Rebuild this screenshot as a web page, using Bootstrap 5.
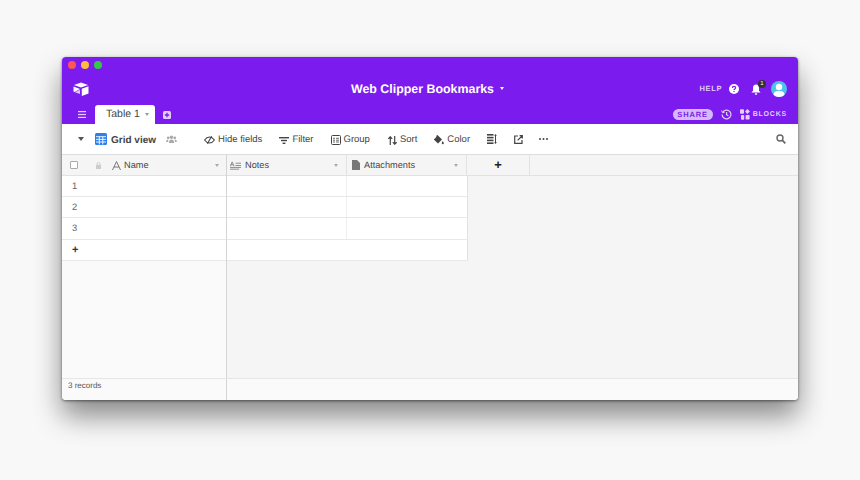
<!DOCTYPE html>
<html lang="en">
<head>
    <meta charset="UTF-8">
    <title>Web Clipper Bookmarks</title>
    <link href="https://cdn.jsdelivr.net/npm/bootstrap@5.3.3/dist/css/bootstrap.min.css" rel="stylesheet">
    <style>
        body { background: #f8f8f8; font-family: "Liberation Sans", Arial, sans-serif; color: #444; min-height: 100vh; padding: 57px 0 0 62px; text-rendering: geometricPrecision; }
        svg { display: block; flex: none; }
        .app-window { width: 736px; height: 343px; background: #fff; border-radius: 4px; overflow: hidden; box-shadow: 0 16px 28px rgba(0,0,0,.45), 0 1px 3px rgba(0,0,0,.5); }
        .app-purple { background: #7c1bee; height: 67px; color: #fff; }
        .traffic { height: 16px; padding: 4px 0 0 6px; gap: 5px; }
        .traffic span { width: 8px; height: 8px; border-radius: 50%; }
        .title-row { display: grid; grid-template-columns: 1fr auto 1fr; align-items: center; height: 32px; padding: 0 11px; }
        .app-title { font-size: 12.4px; font-weight: 700; gap: 6px; padding-right: 5px; }
        .caret-d { width: 0; height: 0; border-left: 2.5px solid transparent; border-right: 2.5px solid transparent; border-top: 3px solid currentColor; }
        .help-txt { font-size: 7.5px; letter-spacing: .6px; font-weight: 700; color: #e2cdfb; margin-right: 7px; }
        .bell-wrap { position: relative; margin: 0 10px 0 12px; }
        .bell-count { position: absolute; top: -4px; right: -5px; width: 8px; height: 8px; border-radius: 50%; background: #333; color: #fff; font-size: 6px; line-height: 8px; text-align: center; }
        .avatar { width: 16px; height: 16px; border-radius: 50%; background: #4fc3e8; overflow: hidden; }
        .tab-row { height: 19px; padding: 0 11px 0 16px; }
        .tab-active { width: 60px; height: 19px; margin-left: 9px; background: #fff; color: #444; border-radius: 3px 3px 0 0; font-size: 10.5px; padding: 0 6px 0 11px; }
        .tab-active .caret-d { color: #999; }
        .share-pill { width: 40px; height: 11px; margin-right: 8px; border-radius: 6px; background: #d5baf9; color: #7c1bee; font-size: 7.5px; line-height: 11px; font-weight: 700; letter-spacing: .9px; text-align: center; }
        .blocks-txt { font-size: 7px; font-weight: 700; letter-spacing: .8px; color: #e2cdfb; margin-left: 3px; padding-top: 2px; }
        .tool-row { height: 31px; padding: 0 12px 0 16px; border-bottom: 1px solid #ddd; font-size: 9.5px; }
        .tool-item { gap: 3px; margin-right: 17px; white-space: nowrap; padding-top: 2px; }
        .view-name { font-size: 10px; font-weight: 700; color: #444; padding-top: 2px; }
        .grid-area { height: 223px; }
        .left-pane { width: 165px; background: #fafafa; border-right: 1px solid #d4d4d4; }
        .right-pane { flex: 1; background: #f5f5f5; }
        .head-row { height: 21px; background: #f5f5f5; border-bottom: 1px solid #e2e2e2; font-size: 9.2px; }
        .head-label { padding-top: 2px; }
        .col-head { width: 120px; height: 100%; padding: 0 8px 0 3px; gap: 4px; border-right: 1px solid #e2e2e2; }
        .col-add { width: 63px; height: 100%; border-right: 1px solid #e2e2e2; color: #222; font-size: 13px; font-weight: 700; }
        .row-left { height: 21px; background: #fff; border-bottom: 1px solid #e8e8e8; padding-left: 10px; font-size: 9.4px; color: #666; }
        .row-right { width: 241px; height: 21px; background: #fff; border-bottom: 1px solid #e8e8e8; border-right: 1px solid #e2e2e2; }
        .row-cell { width: 120px; height: 100%; border-right: 1px solid #efefef; }
        .row-add { font-size: 11px; font-weight: 700; color: #333; }
        .foot-row { height: 22px; background: #fafafa; border-top: 1px solid #e6e6e6; }
        .foot-left { width: 165px; height: 100%; padding: 1px 0 0 6px; border-right: 1px solid #d4d4d4; font-size: 8px; color: #555; }
        .check-box { width: 8px; height: 8px; border: 1px solid #aaa; border-radius: 1px; background: #fff; margin-right: 17px; }
    </style>
</head>
<body>
<div class="app-window d-flex flex-column">
    <div class="app-purple">
        <div class="traffic d-flex">
            <span style="background:#fc5753"></span>
            <span style="background:#fdbc40"></span>
            <span style="background:#34c84a"></span>
        </div>
        <div class="title-row">
            <svg width="16" height="14" viewBox="0 0 16 14" fill="#fff"><path d="M8 0.5 1 3 8 5.6 15 3z"/><path d="M8.8 6.7 15.5 4.2V11.4L8.8 14z"/><path d="M0.5 4.4 7 7 1.5 10 0.5 9.6z"/><path d="M7 7.8V12L1.8 10.3z" opacity=".75"/></svg>
            <div class="app-title d-flex align-items-center">Web Clipper Bookmarks <span class="caret-d"></span></div>
            <div class="d-flex align-items-center justify-content-end">
                <span class="help-txt">HELP</span>
                <svg width="10" height="10" viewBox="0 0 10 10"><circle cx="5" cy="5" r="5" fill="#fff"/><path d="M3.4 3.9C3.4 3 4.1 2.4 5 2.4S6.6 3 6.6 3.8C6.6 4.9 5 5 5 6.1" fill="none" stroke="#7c1bee" stroke-width="1.2"/><rect x="4.4" y="6.9" width="1.2" height="1.2" fill="#7c1bee"/></svg>
                <div class="bell-wrap">
                    <svg width="10" height="11" viewBox="0 0 10 11" fill="#fff"><path d="M5 .5C7 .5 8 2 8 4V6.8L9.6 8.6H.4L2 6.8V4C2 2 3 .5 5 .5z"/><rect x="3.8" y="9.2" width="2.4" height="1.5" rx=".7"/></svg>
                    <span class="bell-count">1</span>
                </div>
                <div class="avatar"><svg width="16" height="16" viewBox="0 0 16 16" fill="#fff"><circle cx="8" cy="6" r="3.2"/><path d="M2.5 13.5C3 10.5 5 10 8 10S13 10.5 13.5 13.5V16H2.5z"/></svg></div>
            </div>
        </div>
        <div class="tab-row d-flex align-items-end">
            <svg class="align-self-center" width="8" height="7" viewBox="0 0 8 7" fill="#e2cdfb"><rect width="8" height="1.2"/><rect y="2.9" width="8" height="1.2"/><rect y="5.8" width="8" height="1.2"/></svg>
            <div class="tab-active d-flex align-items-center justify-content-between">Table 1 <span class="caret-d"></span></div>
            <svg class="align-self-center ms-2" width="8" height="8" viewBox="0 0 8 8"><rect width="8" height="8" rx="1.5" fill="#e2cdfb"/><path d="M4 1.8V6.2M1.8 4H6.2" stroke="#7c1bee" stroke-width="1.3"/></svg>
            <div class="ms-auto d-flex align-items-center align-self-center">
                <span class="share-pill">SHARE</span>
                <svg class="me-2" width="11" height="11" viewBox="0 0 11 11" fill="none" stroke="#e2cdfb" stroke-width="1.2"><path d="M1.7 3.3A4.4 4.4 0 1 1 1.1 5.5"/><path d="M.6 1.5 1.5 3.7 3.7 3.2" stroke-width="1"/><path d="M5.6 3V5.7L7.4 6.8"/></svg>
                <svg width="10" height="11" viewBox="0 0 10 11" fill="#e2cdfb"><rect width="4" height="4.6" y=".2" rx=".8"/><rect x="1" y="6" width="3.2" height="4.8" rx=".8"/><path d="M7.3 0 10 2.5 7.3 5 5 2.5z"/><rect x="5.6" y="6" width="4" height="4.6" rx=".8"/></svg>
                <span class="blocks-txt">BLOCKS</span>
            </div>
        </div>
    </div>

    <div class="tool-row d-flex align-items-center">
        <span class="caret-d me-2" style="border-left-width:3.5px;border-right-width:3.5px;border-top-width:4.5px;color:#555"></span>
        <svg class="me-1" style="margin-left:3px" width="12" height="12" viewBox="0 0 12 12"><rect width="12" height="12" rx="1.5" fill="#2d7ff0"/><path d="M1 3.7H11M1 6.4H11M1 9H11M4.3 3.7V11.5M7.8 3.7V11.5" stroke="#fff" stroke-width=".9"/></svg>
        <span class="view-name">Grid view</span>
        <svg style="margin:0 27px 0 10px" width="11" height="8" viewBox="0 0 12 9" fill="#aaa"><circle cx="6" cy="2.5" r="2"/><circle cx="2.3" cy="3.2" r="1.5"/><circle cx="9.7" cy="3.2" r="1.5"/><path d="M3 9C3 6 4.5 5 6 5S9 6 9 9zM0 8C0 6 1 5.2 2.4 5.2L2.2 8zM12 8C12 6 11 5.2 9.6 5.2L9.8 8z"/></svg>
        <div class="tool-item d-flex align-items-center">
            <svg width="11" height="8" viewBox="0 0 11 8" fill="none" stroke="#444" stroke-width="1.1"><path d="M.6 4C2 2 3.6 1 5.5 1S9 2 10.4 4C9 6 7.4 7 5.5 7S2 6 .6 4z"/><path d="M7.6 .3 3.4 7.7"/></svg>Hide fields
        </div>
        <div class="tool-item d-flex align-items-center">
            <svg width="10" height="7" viewBox="0 0 10 7" fill="#444"><rect width="10" height="1.4"/><rect x="2" y="2.8" width="6" height="1.4"/><rect x="3.6" y="5.6" width="2.8" height="1.4"/></svg>Filter
        </div>
        <div class="tool-item d-flex align-items-center">
            <svg width="10" height="10" viewBox="0 0 10 10" fill="none" stroke="#444"><rect x=".5" y=".5" width="9" height="9" rx="1"/><path d="M2 3.3H4M5 3.3H8M2 5.2H4M5 5.2H8M2 7H4M5 7H8" stroke-width=".8"/></svg>Group
        </div>
        <div class="tool-item d-flex align-items-center" style="margin-left:1px;margin-right:16px">
            <svg width="9" height="9" viewBox="0 0 9 9" fill="none" stroke="#444" stroke-width="1.2"><path d="M2.3 9V1M.4 2.8 2.3.8 4.2 2.8M6.7 0V8M4.8 6.2 6.7 8.2 8.6 6.2"/></svg>Sort
        </div>
        <div class="tool-item d-flex align-items-center">
            <svg width="11" height="10" viewBox="0 0 11 10" fill="#444"><path d="M4.5 0 9 4.5 5 8.5.8 4.5 3.6 1.8 3 1zM9.7 6C10.3 7 10.8 7.5 10.8 8.2A1 1 0 0 1 8.8 8.2C8.8 7.5 9.2 7 9.7 6z"/></svg>Color
        </div>
        <svg style="margin-right:17px" width="10" height="10" viewBox="0 0 10 10" fill="#444"><rect width="6.5" height="1.6"/><rect y="2.8" width="6.5" height="1.6"/><rect y="5.6" width="6.5" height="1.6"/><rect y="8.4" width="6.5" height="1.6"/><path d="M8.5 0 9.9 1.8H9V8.2H9.9L8.5 10 7.1 8.2H8V1.8H7.1z"/></svg>
        <svg style="margin-right:16px" width="9" height="9" viewBox="0 0 9 9" fill="none" stroke="#444" stroke-width="1.2"><path d="M4 1H.7V8.3H8V5"/><path d="M3.6 5.4 8 1M5.6.7H8.3V3.4"/></svg>
        <svg width="9" height="2" viewBox="0 0 9 2" fill="#444"><circle cx="1" cy="1" r="1"/><circle cx="4.5" cy="1" r="1"/><circle cx="8" cy="1" r="1"/></svg>
        <svg class="ms-auto" width="10" height="10" viewBox="0 0 10 10" fill="none" stroke="#666"><circle cx="4" cy="4" r="3" stroke-width="1.4"/><path d="M6.2 6.2 9.3 9.3" stroke-width="1.8"/></svg>
    </div>

    <div class="grid-area d-flex">
        <div class="left-pane">
            <div class="head-row d-flex align-items-center" style="padding:0 7px 0 8px">
                <span class="check-box"></span>
                <svg width="7" height="7" viewBox="0 0 7 7" fill="#ccc" style="margin-right:10px"><rect x="1" y="3" width="5" height="4" rx=".5"/><path d="M2 3V2A1.5 1.5 0 0 1 5 2V3" fill="none" stroke="#ccc"/></svg>
                <svg width="9" height="9" viewBox="0 0 9 9" fill="none" stroke="#777" style="margin-right:3px"><path d="M.5 9 4.5.5 8.5 9M2 6H7"/></svg>
                <span class="head-label">Name</span>
                <span class="caret-d ms-auto" style="color:#aaa"></span>
            </div>
            <div class="row-left d-flex align-items-center">1</div>
            <div class="row-left d-flex align-items-center">2</div>
            <div class="row-left d-flex align-items-center" style="height:22px">3</div>
            <div class="row-left row-add d-flex align-items-center">+</div>
        </div>
        <div class="right-pane">
            <div class="head-row d-flex align-items-center">
                <div class="col-head d-flex align-items-center">
                    <svg width="11" height="9" viewBox="0 0 12 9" fill="none" stroke="#777" stroke-width=".9"><path d="M.4 5.2 2.4.6 4.4 5.2M1 3.8H3.8M6 2H12M6 4.5H12M0 6.6H12M0 8.5H10"/></svg>
                    <span class="head-label">Notes</span>
                    <span class="caret-d ms-auto" style="color:#aaa"></span>
                </div>
                <div class="col-head d-flex align-items-center" style="padding-left:5px">
                    <svg width="8" height="10" viewBox="0 0 8 10" fill="#777"><path d="M0 0H5L8 3V10H0z"/></svg>
                    <span class="head-label">Attachments</span>
                    <span class="caret-d ms-auto" style="color:#aaa"></span>
                </div>
                <div class="col-add d-flex align-items-center justify-content-center">+</div>
            </div>
            <div class="row-right d-flex"><div class="row-cell"></div></div>
            <div class="row-right d-flex"><div class="row-cell"></div></div>
            <div class="row-right d-flex" style="height:22px"><div class="row-cell"></div></div>
            <div class="row-right d-flex"></div>
        </div>
    </div>

    <div class="foot-row d-flex">
        <div class="foot-left">3 records</div>
    </div>
</div>
<script src="https://cdn.jsdelivr.net/npm/bootstrap@5.3.3/dist/js/bootstrap.bundle.min.js"></script>
</body>
</html>
